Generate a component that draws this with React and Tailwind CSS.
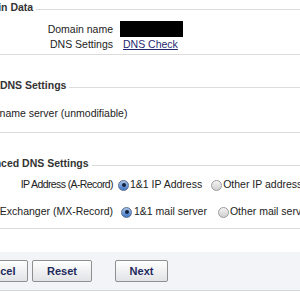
import React from "react";

function Heading({ children, className = "" }) {
  return (
    <div className={"flex items-center h-[14px] leading-[14px] " + className}>
      <span className="font-bold text-[#333] whitespace-nowrap">{children}</span>
      <div className="flex-1 h-px mt-[4px] ml-[3px] bg-[#dcdcdc]" />
    </div>
  );
}

function Radio({ checked }) {
  if (checked) {
    return (
      <span className="inline-flex items-center justify-center w-[11px] h-[11px] rounded-full border border-[#5d6f8c] bg-gradient-to-b from-[#a9c4ea] to-[#3f78c8] shrink-0">
        <span className="w-[4px] h-[4px] rounded-full bg-[#14213d]" />
      </span>
    );
  }
  return (
    <span className="inline-block w-[11px] h-[11px] rounded-full border border-[#9b9b9b] bg-gradient-to-b from-[#f4f4f4] to-[#cfcfcf] shrink-0" />
  );
}

function Button({ children, className = "" }) {
  return (
    <button
      className={
        "h-[22px] rounded-[2px] border border-[#8f8f8f] bg-gradient-to-b from-white to-[#e2e3e6] text-[11px] font-bold text-[#1d2a5c] leading-none shrink-0 " +
        className
      }
    >
      {children}
    </button>
  );
}

export default function App() {
  return (
    <div className="w-[300px] h-[300px] overflow-hidden bg-white font-['Liberation_Sans',Arial,sans-serif] text-[10.5px] text-[#222]">
      <div className="ml-[-31px] w-[331px]">
        <Heading>Domain Data</Heading>
        <div className="mt-[7px] grid grid-cols-[144px_1fr] gap-x-[7px] items-center">
          <div className="text-right leading-[16px] h-[16px]">Domain name</div>
          <div className="w-[63px] h-[16px] bg-black" />
          <div className="text-right leading-[15px] h-[15px]">DNS Settings</div>
          <div className="leading-[15px] h-[15px]">
            <a className="ml-[3px] text-[#1f2a70] underline">DNS Check</a>
          </div>
        </div>
        <div className="mt-[2px] h-px bg-[#dcdcdc]" />

        <Heading className="mt-[23px]">Basic DNS Settings</Heading>
        <div className="mt-[14px] pl-[9px] leading-[14px] whitespace-nowrap">
          1&amp;1 name server (unmodifiable)
        </div>
        <div className="mt-[12px] h-px bg-[#dcdcdc]" />

        <Heading className="mt-[23px]">Advanced DNS Settings</Heading>
        <div className="mt-[7px] flex items-center h-[16px] whitespace-nowrap">
          <div className="w-[144px] shrink-0 text-right tracking-[-0.6px]">IP Address (A-Record)</div>
          <span className="ml-[5px] shrink-0 flex"><Radio checked /></span>
          <span className="ml-[1px] shrink-0">1&amp;1 IP Address</span>
          <span className="ml-[9px] shrink-0 flex"><Radio /></span>
          <span className="ml-[1px] shrink-0">Other IP address</span>
        </div>
        <div className="mt-[11px] flex items-center h-[16px] whitespace-nowrap">
          <div className="w-[144px] shrink-0 text-right">Mail Exchanger (MX-Record)</div>
          <span className="ml-[8px] shrink-0 flex"><Radio checked /></span>
          <span className="ml-[2px] shrink-0">1&amp;1 mail server</span>
          <span className="ml-[11px] shrink-0 flex"><Radio /></span>
          <span className="ml-[1px] shrink-0">Other mail server</span>
        </div>
        <div className="mt-[8px] h-px bg-[#dcdcdc]" />
      </div>

      <div className="mt-[23px] h-[39px] bg-[#f2f4f7] border-b border-[#d3d7dd] pt-[8px]">
        <div className="ml-[-33px] flex items-center">
          <Button className="w-[61px]">Cancel</Button>
          <Button className="w-[60px] ml-[4px]">Reset</Button>
          <Button className="w-[53px] ml-[23px]">Next</Button>
        </div>
      </div>
    </div>
  );
}
